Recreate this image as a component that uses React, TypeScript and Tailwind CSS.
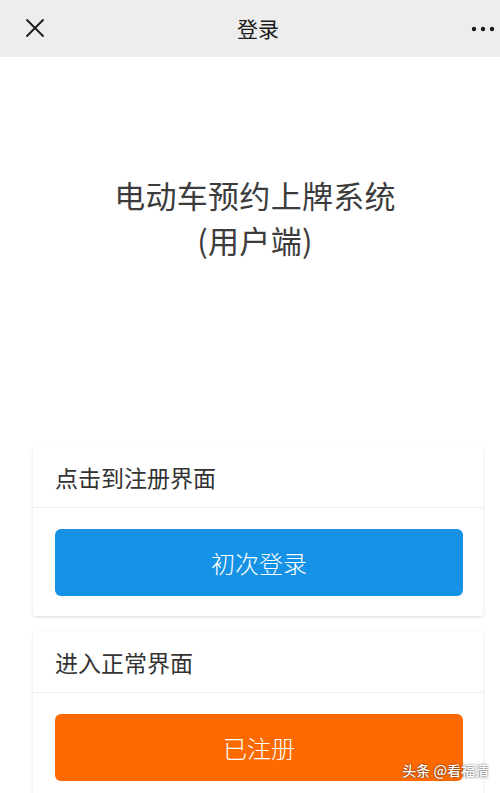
const font = { fontFamily: '"Noto Sans CJK SC", "Noto Sans", sans-serif' };

function Card({ label, button, color }: { label: string; button: string; color: string }) {
  return (
    <div className="ml-[33px] w-[450px] bg-white rounded-[3px] shadow-[0_1px_3px_rgba(0,0,0,0.14)]">
      <div className="h-[61px] flex items-center pl-[22px] text-[23px] text-[#333] border-b border-[#ededed]">
        {label}
      </div>
      <div className="pl-[22px] pr-[20px] pt-[21px] pb-[20px]">
        <button
          type="button"
          className={`w-full h-[67px] rounded-[6px] text-white text-[24px] font-light ${color}`}
        >
          {button}
        </button>
      </div>
    </div>
  );
}

export default function App() {
  return (
    <div className="relative w-[500px] h-[793px] overflow-hidden bg-white" style={font}>
      {/* top bar */}
      <div className="h-[57px] bg-[#ededed] flex items-center justify-between px-[25px] pr-[5px]">
        <svg width="20" height="20" viewBox="0 0 20 20" className="-mt-[1px]">
          <path d="M2 2 L18 18 M18 2 L2 18" stroke="#1a1a1a" strokeWidth="1.8" strokeLinecap="round" />
        </svg>
        <div className="text-[21px] text-[#1a1a1a]">登录</div>
        <svg width="24" height="6" viewBox="0 0 24 6">
          <circle cx="3" cy="3" r="2.2" fill="#1a1a1a" />
          <circle cx="12" cy="3" r="2.2" fill="#1a1a1a" />
          <circle cx="21" cy="3" r="2.2" fill="#1a1a1a" />
        </svg>
      </div>

      {/* title */}
      <div className="pt-[115px] pl-[10px] text-center text-[31px] leading-[45px] text-[#3c3c3c] tracking-[0.3px]">
        <div>电动车预约上牌系统</div>
        <div>(用户端)</div>
      </div>

      <div className="mt-[185px] flex flex-col gap-[16px]">
        <Card label="点击到注册界面" button="初次登录" color="bg-[#1592e6]" />
        <Card label="进入正常界面" button="已注册" color="bg-[#ff6a00]" />
      </div>

      <div className="absolute right-[11px] bottom-[12px] text-[14px] font-medium text-white [text-shadow:0_0_2px_rgba(0,0,0,0.8)]">
        头条 @看福清
      </div>
    </div>
  );
}
